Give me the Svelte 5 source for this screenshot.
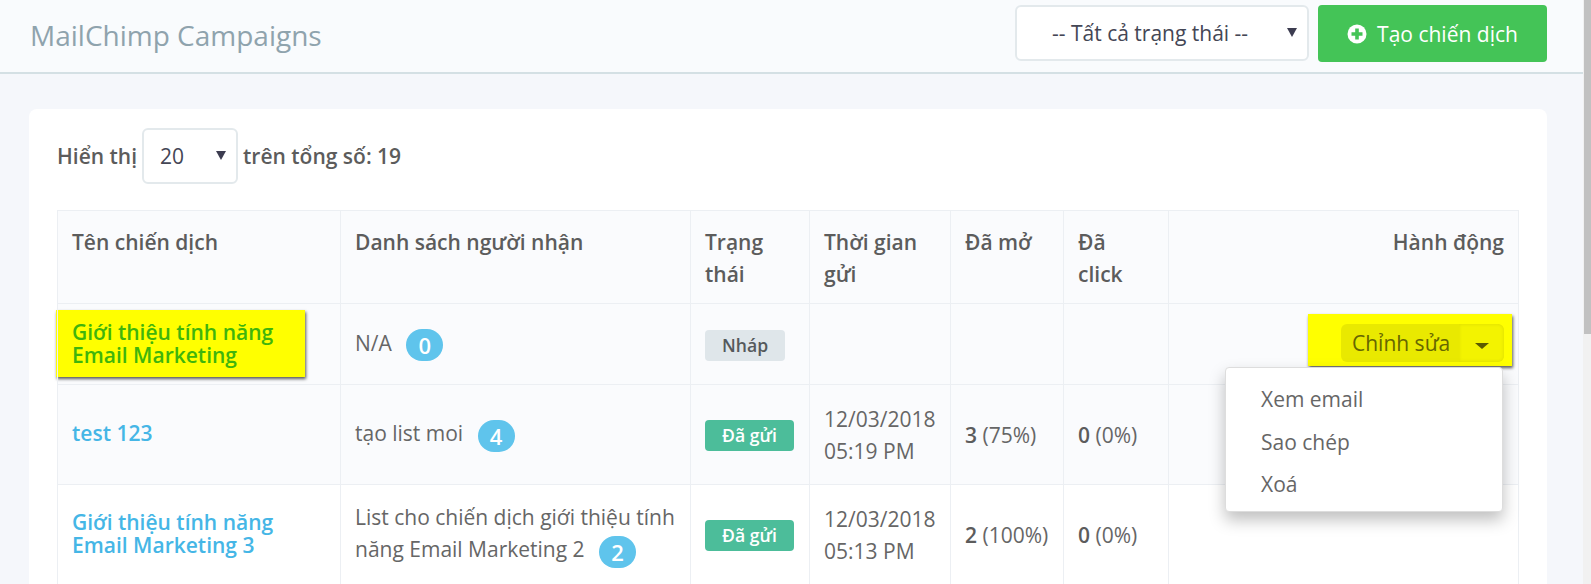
<script>
  const rows = [
    { name: ['Giới thiệu tính năng', 'Email Marketing 3'], list: 'List cho chiến dịch giới thiệu tính năng Email Marketing 2', count: 2, date: '12/03/2018', time: '05:13 PM', opened: 2, openedPct: '100%' }
  ];
</script>

<div class="page">
  <div class="content">
    <header class="topbar">
      <h1>MailChimp Campaigns</h1>
      <div class="topbar-actions">
        <div class="select status-select">-- Tất cả trạng thái --<span class="arrow"></span></div>
        <button class="btn-create">
          <svg width="20" height="20" viewBox="0 0 20 20">
            <circle cx="10" cy="10" r="9.5" fill="#fff" />
            <path d="M8.2 4.5h3.6v3.7h3.7v3.6h-3.7v3.7H8.2v-3.7H4.5V8.2h3.7z" fill="#44c457" />
          </svg>
          Tạo chiến dịch
        </button>
      </div>
    </header>

    <main>
      <section class="card">
        <div class="toolbar">
          <span>Hiển thị</span>
          <div class="select page-select">20<span class="arrow"></span></div>
          <span>trên tổng số: 19</span>
        </div>

        <table>
          <colgroup>
            <col style="width:283px" />
            <col style="width:350px" />
            <col style="width:119px" />
            <col style="width:141px" />
            <col style="width:113px" />
            <col style="width:105px" />
            <col style="width:350px" />
          </colgroup>
          <thead>
            <tr>
              <th>Tên chiến dịch</th>
              <th>Danh sách người nhận</th>
              <th>Trạng thái</th>
              <th>Thời gian gửi</th>
              <th>Đã mở</th>
              <th>Đã click</th>
              <th class="right">Hành động</th>
            </tr>
          </thead>
          <tbody>
            <tr class="shaded first">
              <td>
                <div class="highlight name-highlight"><a href="#top" class="name green">Giới thiệu tính năng<br />Email Marketing</a></div>
              </td>
              <td>N/A <span class="count">0</span></td>
              <td><span class="status draft">Nháp</span></td>
              <td></td>
              <td></td>
              <td></td>
              <td class="action-cell">
                <div class="action-wrap">
                  <div class="highlight action-highlight">
                    <div class="btn-group">
                      <span class="btn-edit">Chỉnh sửa</span>
                      <span class="btn-toggle"><span class="caret"></span></span>
                    </div>
                  </div>
                  <ul class="menu">
                    <li>Xem email</li>
                    <li>Sao chép</li>
                    <li>Xoá</li>
                  </ul>
                </div>
              </td>
            </tr>
            <tr class="shaded tall">
              <td><a href="#top" class="name">test 123</a></td>
              <td>tạo list moi <span class="count">4</span></td>
              <td><span class="status sent">Đã gửi</span></td>
              <td>12/03/2018<br />05:19 PM</td>
              <td><b>3</b> (75%)</td>
              <td><b>0</b> (0%)</td>
              <td></td>
            </tr>
            {#each rows as row}
              <tr class="tall">
                <td><a href="#top" class="name">{row.name[0]}<br />{row.name[1]}</a></td>
                <td>{row.list} <span class="count">{row.count}</span></td>
                <td><span class="status sent">Đã gửi</span></td>
                <td>{row.date}<br />{row.time}</td>
                <td><b>{row.opened}</b> ({row.openedPct})</td>
                <td><b>0</b> (0%)</td>
                <td></td>
              </tr>
            {/each}
          </tbody>
        </table>
      </section>
    </main>
  </div>

  <div class="scrollbar"><div class="thumb"></div></div>
</div>

<style>
  :global(body) {
    margin: 0;
    overflow: hidden;
  }

  .page {
    display: flex;
    height: 584px;
    overflow: hidden;
    font-family: "Open Sans", sans-serif;
    font-size: 21px;
    line-height: 32px;
    color: #666;
    background: #f5f7fb;
  }

  .content {
    flex: 1;
    min-width: 0;
  }

  .scrollbar {
    width: 8px;
    background: #f1f1f1;
  }

  .thumb {
    height: 334px;
    margin-left: 1px;
    background: #c1c1c1;
  }

  .topbar {
    display: flex;
    align-items: flex-start;
    justify-content: space-between;
    height: 74px;
    box-sizing: border-box;
    padding: 5px 36px 0 30px;
    background: #f9fbfd;
    border-bottom: 2px solid #d4e0e4;
  }

  h1 {
    margin: 9px 0 0;
    font-size: 28px;
    line-height: 42px;
    font-weight: 400;
    color: #8fa3ad;
  }

  .topbar-actions {
    display: flex;
    gap: 9px;
  }

  .select {
    display: flex;
    align-items: center;
    box-sizing: border-box;
    position: relative;
    background: #fff;
    border: 2px solid #e3e9ec;
    border-radius: 6px;
    color: #444655;
  }

  .status-select {
    width: 294px;
    height: 56px;
    padding-left: 35px;
  }

  .page-select {
    width: 96px;
    height: 56px;
    padding-left: 16px;
    font-weight: 400;
  }

  .arrow {
    position: absolute;
    right: 10px;
    top: 21px;
    border-left: 5px solid transparent;
    border-right: 5px solid transparent;
    border-top: 9px solid #3c3c50;
  }

  .btn-create {
    display: flex;
    align-items: center;
    justify-content: center;
    gap: 10px;
    width: 229px;
    height: 57px;
    border: 0;
    border-radius: 4px;
    background: #44c457;
    color: #fff;
    font: inherit;
  }

  main {
    padding: 35px 36px 0 29px;
  }

  .card {
    padding: 19px 0 40px 28px;
    background: #fff;
    border-radius: 8px;
  }

  .toolbar {
    display: flex;
    align-items: center;
    gap: 5px;
    height: 56px;
    margin-bottom: 26px;
    font-weight: 600;
    color: #5c5c5c;
  }

  table {
    width: 1461px;
    table-layout: fixed;
    border-collapse: collapse;
  }

  th,
  td {
    padding: 15px 14px 13px;
    border: 1px solid #eceff3;
    text-align: left;
    vertical-align: middle;
  }

  th {
    vertical-align: top;
    font-weight: 600;
    color: #5c5c5c;
    background: #fafbfd;
  }

  th.right {
    text-align: right;
  }

  .shaded td {
    background: #fafbfd;
  }

  .first {
    height: 81px;
  }

  .tall {
    height: 100px;
  }

  .first td,
  .tall td {
    padding-top: 0;
    padding-bottom: 0;
  }

  .name {
    display: block;
    padding-bottom: 2px;
    line-height: 23px;
    font-weight: 600;
    color: #45b6e6;
    text-decoration: none;
  }

  .name.green {
    color: #3fb50c;
  }

  .highlight {
    background: #ffff00;
    box-shadow: 1px 2px 3px rgba(0, 0, 0, 0.65);
  }

  .name-highlight {
    margin: 0 0 2px -16px;
    width: 249px;
    box-sizing: border-box;
    padding: 11px 0 8px 16px;
  }

  .count {
    display: inline-block;
    width: 37px;
    height: 32px;
    margin-left: 9px;
    border-radius: 16px;
    background: #5fc4ec;
    color: #fff;
    font-size: 22px;
    font-weight: 600;
    text-align: center;
    vertical-align: middle;
  }

  .status {
    display: inline-block;
    height: 31px;
    padding: 0 17px;
    border-radius: 4px;
    font-size: 17.6px;
    line-height: 31px;
    font-weight: 600;
    vertical-align: middle;
  }

  .draft {
    background: #dfe6ea;
    color: #55595c;
  }

  .sent {
    background: #4cbd9a;
    color: #fff;
  }

  b {
    font-weight: 600;
    color: #5c5c5c;
  }

  .action-cell {
    padding-right: 6px;
  }

  .action-wrap {
    position: relative;
    display: flex;
    justify-content: flex-end;
    margin-bottom: 8px;
  }

  .action-highlight {
    display: flex;
    justify-content: flex-end;
    width: 204px;
    height: 52px;
    box-sizing: border-box;
    padding: 10px 8px 0 0;
  }

  .btn-group {
    display: flex;
    height: 38px;
    border-radius: 6px;
    overflow: hidden;
    background: #e9e900;
    color: #666600;
    line-height: 38px;
  }

  .btn-edit {
    width: 118px;
    padding-left: 11px;
    box-sizing: border-box;
  }

  .btn-toggle {
    display: flex;
    align-items: center;
    justify-content: center;
    width: 45px;
    border-radius: 0 6px 6px 0;
    background: #f3f300;
    box-shadow: inset 0 0 3px 1px rgba(0, 0, 0, 0.06);
  }

  .caret {
    margin-top: 6px;
    border-left: 7px solid transparent;
    border-right: 7px solid transparent;
    border-top: 6px solid #5a5a00;
  }

  .menu {
    position: absolute;
    top: 53px;
    right: 9px;
    width: 278px;
    height: 145px;
    box-sizing: border-box;
    margin: 0;
    padding: 10px 0 0 35px;
    list-style: none;
    background: #fff;
    border: 1px solid #ddd;
    border-radius: 4px;
    box-shadow: 0 8px 16px rgba(0, 0, 0, 0.25);
    line-height: 42.5px;
    z-index: 2;
  }
</style>
